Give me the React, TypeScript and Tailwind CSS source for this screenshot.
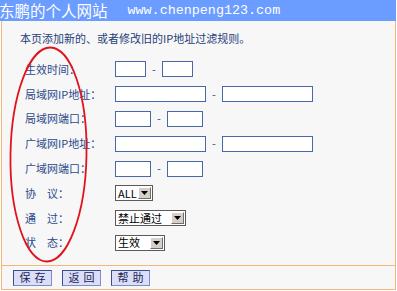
import React from "react";

const cjk = "font-['Noto_Sans_CJK_SC',_'Liberation_Sans',_sans-serif]";

function Box({ w }: { w: string }) {
  return <div className={`${w} h-[16px] border border-[#4a68a8] bg-white`} />;
}

function Dash() {
  return <span className="w-[16px] text-center text-[11px] leading-none text-[#2b4a8b]">-</span>;
}

function Select({ w, label }: { w: string; label: string }) {
  return (
    <div className={`${w} h-[16px] flex items-center border border-[#5a5a5a] bg-white`}>
      <span className="flex-1 pl-[2px] text-[11px] leading-none text-black">{label}</span>
      <div className="mr-[1px] flex h-[12px] w-[13px] items-center justify-center border-t border-l border-t-white border-l-white border-r border-b border-r-[#6e6e6e] border-b-[#6e6e6e] bg-[#d4d0c8]">
        <svg width="7" height="4" viewBox="0 0 7 4">
          <path d="M0 0h7L3.5 4z" fill="#000" />
        </svg>
      </div>
    </div>
  );
}

function Btn({ children }: { children: React.ReactNode }) {
  return (
    <div className="flex h-[16px] w-[39px] items-center justify-center border border-[#3c4c8c] border-r-[#7f8cc8] border-b-[#7f8cc8] bg-[#dadef8] text-[11px] leading-none tracking-[4px] pl-[4px] text-[#1a1f55]">
      {children}
    </div>
  );
}

const rows: { label: string; field: React.ReactNode }[] = [
  {
    label: "生效时间：",
    field: (
      <>
        <Box w="w-[31px]" />
        <Dash />
        <Box w="w-[31px]" />
      </>
    ),
  },
  {
    label: "局域网IP地址：",
    field: (
      <>
        <Box w="w-[91px]" />
        <Dash />
        <Box w="w-[91px]" />
      </>
    ),
  },
  {
    label: "局域网端口：",
    field: (
      <>
        <Box w="w-[36px]" />
        <Dash />
        <Box w="w-[36px]" />
      </>
    ),
  },
  {
    label: "广域网IP地址：",
    field: (
      <>
        <Box w="w-[91px]" />
        <Dash />
        <Box w="w-[91px]" />
      </>
    ),
  },
  {
    label: "广域网端口：",
    field: (
      <>
        <Box w="w-[36px]" />
        <Dash />
        <Box w="w-[36px]" />
      </>
    ),
  },
  { label: "协　议：", field: <Select w="w-[38px]" label="ALL" /> },
  { label: "通　过：", field: <Select w="w-[71px]" label="禁止通过" /> },
  { label: "状　态：", field: <Select w="w-[50px]" label="生效" /> },
];

export default function App() {
  return (
    <div className={`relative h-[291px] w-[397px] overflow-hidden bg-white ${cjk}`}>
      {/* title bar with watermark */}
      <div className="flex h-[21px] w-[396px] items-center bg-[#6b9cff] text-white">
        <span className="ml-[-1px] text-[15.5px] leading-none">东鹏的个人网站</span>
        <span className="ml-[20px] font-['Liberation_Mono',_monospace] text-[13.4px] leading-none">
          www.chenpeng123.com
        </span>
      </div>

      {/* main panel */}
      <div className="ml-[1px] flex h-[269px] w-[395px] flex-col border-x border-b border-[#f3b877] bg-[#f7f7f7]">
        <p className="mt-[11px] pl-[18px] text-[11px] leading-[12px] text-[#1f3d7a]">
          本页添加新的、或者修改旧的IP地址过滤规则。
        </p>

        <div className="mt-[13px] flex flex-col pl-[23px]">
          {rows.map((r) => (
            <div key={r.label} className="flex h-[24.8px] items-center">
              <span className="w-[90px] text-[11px] leading-none text-[#2b4a8b]">{r.label}</span>
              <div className="flex items-center">{r.field}</div>
            </div>
          ))}
        </div>

        <div className="flex-1" />

        <div className="flex h-[24px] items-center gap-[10px] border-t border-[#f3b877] pl-[11px]">
          <Btn>保存</Btn>
          <Btn>返回</Btn>
          <Btn>帮助</Btn>
        </div>
      </div>

      {/* hand-drawn red circle */}
      <svg className="pointer-events-none absolute left-0 top-0" width="397" height="291">
        <ellipse cx="48.5" cy="154.5" rx="38" ry="107" fill="none" stroke="#e0141e" strokeWidth="1.8" transform="rotate(1 48.5 154.5)" />
      </svg>
    </div>
  );
}
